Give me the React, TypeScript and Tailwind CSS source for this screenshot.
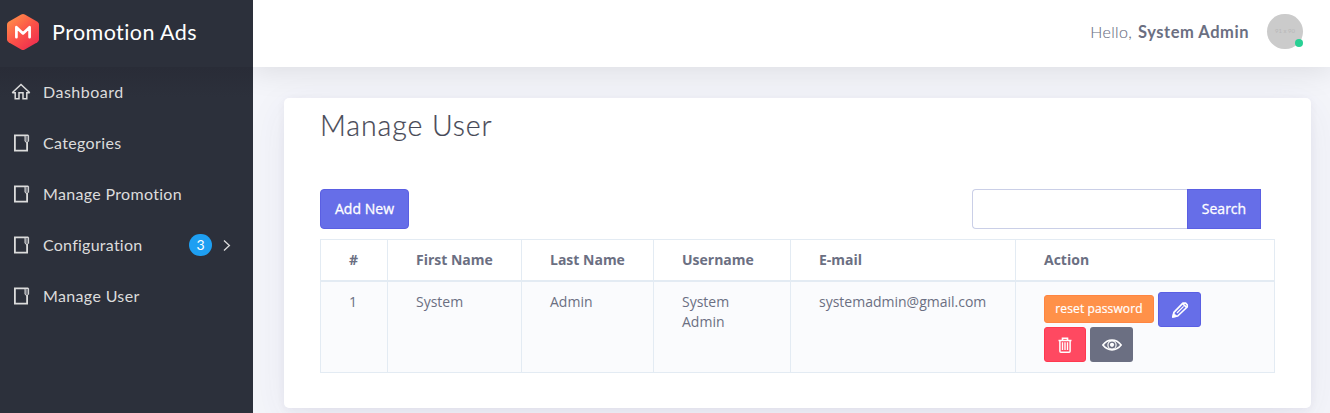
import React from 'react';

const BookIcon = () => (
  <svg className="h-5 w-5 shrink-0" viewBox="0 0 20 20" fill="none" stroke="#dcdcdc">
    <path d="M3.9 18.4V2.4H17.3M3.1 17.6H17M16.1 9V18.4" strokeWidth="1.8" />
    <path d="M14 2.5V8.3L15.8 9.8L17.6 8.3V2.5Z" strokeWidth="1" fill="#777a82" />
  </svg>
);

const HomeIcon = () => (
  <svg className="h-5 w-5 shrink-0" viewBox="0 0 20 20" fill="none" stroke="#dcdcdc" strokeWidth="1.5">
    <path d="M1.2 10.7L10 2.5L18.8 10.7" />
    <path d="M1.4 10.7H4.2V16.8H8V10.7H12V16.8H15.8V10.7H18.6" />
  </svg>
);

const Logo = () => (
  <svg className="h-9 w-8 shrink-0" viewBox="0 0 32 36">
    <defs>
      <linearGradient id="logoFill" x1="0.1" y1="0.05" x2="0.8" y2="0.95">
        <stop offset="0" stopColor="#ff9149" />
        <stop offset="0.55" stopColor="#fb5148" />
        <stop offset="1" stopColor="#ef2f4f" />
      </linearGradient>
    </defs>
    <path
      d="M14.2 0.5Q16 -0.5 17.8 0.5L30.4 7.7Q32 8.7 32 10.5V25.5Q32 27.3 30.4 28.3L17.8 35.5Q16 36.5 14.2 35.5L1.6 28.3Q0 27.3 0 25.5V10.5Q0 8.7 1.6 7.7Z"
      fill="url(#logoFill)"
    />
    <path d="M9.4 23.2V13.2L16 19.4L22.6 13.2V23.2" fill="none" stroke="#fff" strokeWidth="2.7" strokeLinecap="round" strokeLinejoin="round" />
  </svg>
);

const PencilIcon = () => (
  <svg className="h-[18px] w-[18px]" viewBox="0 0 18 18" fill="none" stroke="#fff" strokeWidth="1.7" strokeLinejoin="round">
    <path d="M1.8 16L2.9 11.4L11.9 2.2H14.6L16.2 3.8V6L6.7 15Z" />
    <path d="M6 12L12.6 5.4" strokeWidth="1.2" />
    <path d="M11.8 2.8L15.6 6.4" strokeWidth="1.6" />
    <path d="M1.6 16.3L2.6 12.2L6 15.3Z" fill="#fff" strokeWidth="0.8" />
  </svg>
);

const TrashIcon = () => (
  <svg className="h-4 w-4" viewBox="0 0 16 16" fill="none" stroke="#fff">
    <path d="M1.5 3.5H14.5M5.5 3V1.2H10.5V3" strokeWidth="1.6" />
    <path d="M2.9 3.5V14.2Q2.9 15.2 3.9 15.2H12.1Q13.1 15.2 13.1 14.2V3.5" strokeWidth="1.5" />
    <path d="M5.5 5.2V13M8 5.2V13M10.5 5.2V13" strokeWidth="1.4" />
  </svg>
);

const EyeIcon = () => (
  <svg className="h-4 w-5" viewBox="0 0 20 16" fill="none" stroke="#fff">
    <path d="M0.9 8Q4.6 3.2 10 3.2T19.1 8Q15.4 12.8 10 12.8T0.9 8Z" strokeWidth="1.7" />
    <circle cx="10" cy="8" r="4.1" strokeWidth="1.2" />
    <circle cx="10" cy="7.8" r="2.1" fill="#fff" stroke="none" />
  </svg>
);

const menu = [
  { label: 'Dashboard', spacing: 'tracking-[0.5px]', home: true },
  { label: 'Categories', spacing: 'tracking-[0.35px]' },
  { label: 'Manage Promotion', spacing: 'tracking-[0.32px]' },
  { label: 'Configuration', spacing: 'tracking-[0.25px]', badge: 3 },
  { label: 'Manage User', spacing: 'tracking-[0.35px]' },
];

const columns = [
  { title: '#', width: 'w-[67px]' },
  { title: 'First Name', width: 'w-[134px]' },
  { title: 'Last Name', width: 'w-[132px]' },
  { title: 'Username', width: 'w-[137px]' },
  { title: 'E-mail', width: 'w-[225px]' },
  { title: 'Action', width: 'w-[259px]' },
];

const cells = ['1', 'System', 'Admin', 'System Admin', 'systemadmin@gmail.com'];

export default function App() {
  return (
    <div className="flex h-[413px] w-[1330px] overflow-hidden bg-[#f4f5fa] font-['Open_Sans',sans-serif] text-sm text-[#6b6f82]">
      <aside className="z-10 flex w-[253px] shrink-0 flex-col bg-[#2c303b] font-['Lato',sans-serif]">
        <div className="flex h-[67px] items-center gap-[13px] pb-[3px] pl-[7px]">
          <Logo />
          <span className="whitespace-nowrap text-[21.5px] tracking-[0.42px] text-white">Promotion Ads</span>
        </div>
        <nav className="flex grow flex-col bg-linear-to-b from-[#292c37] to-[#2c303b] to-[30px]">
          {menu.map((item) => (
            <a key={item.label} className="flex h-[51px] items-center pb-[2px] pl-[11px]">
              {item.home ? <HomeIcon /> : <BookIcon />}
              <span className={`ml-3 whitespace-nowrap text-base text-[#dcdcdc] ${item.spacing}`}>{item.label}</span>
              {item.badge && (
                <span className="ml-auto mr-[18px] flex items-center gap-[11px]">
                  <span className="flex h-[22px] w-[23px] items-center justify-center rounded-full bg-[#1e9ff2] text-sm text-white">
                    {item.badge}
                  </span>
                  <svg className="h-3 w-[12px]" viewBox="0 0 12 12" fill="none" stroke="#dcdcdc" strokeWidth="1.3">
                    <path d="M1 1.5L6.4 6.5L1 11.5" />
                  </svg>
                </span>
              )}
            </a>
          ))}
        </nav>
      </aside>

      <div className="flex min-w-0 grow flex-col">
        <header className="flex h-[67px] shrink-0 items-center justify-end bg-white pr-[27px] pb-[4px] font-['Lato',sans-serif] shadow-[0_2px_30px_2px_rgba(0,0,0,0.1)]">
          <span className="whitespace-nowrap text-base font-light tracking-[0.35px] [-webkit-text-stroke:0.1px]">Hello,</span>
          <span className="ml-[6px] mr-[18px] whitespace-nowrap pt-[2px] text-[16.5px] font-bold tracking-[0.53px]">System Admin</span>
          <span className="relative flex h-[35px] w-9 items-center justify-center rounded-full bg-[#cbcbcb] text-[6px] text-[#b8b8b8]">
            91 x 90
            <i className="absolute right-0 bottom-[2px] h-2 w-2 rounded-full bg-[#28d094]" />
          </span>
        </header>

        <main className="pt-[31px] pl-[31px]">
          <section className="h-[310px] w-[1027px] rounded-[5px] bg-white px-9 pt-[9px] shadow-[0_10px_40px_0_rgba(62,57,107,0.07),0_2px_9px_0_rgba(62,57,107,0.06)]">
            <h1 className="h-[82px] font-['Lato',sans-serif] text-[28.5px] leading-9 font-light tracking-[0.9px] text-[#464855] [-webkit-text-stroke:0.2px]">Manage User</h1>
            <div className="flex h-10 items-stretch justify-between pr-[14px]">
              <button className="w-[89px] rounded-[4px] border border-[#5a5fe3] bg-[#666ee8] font-medium tracking-[0.05px] text-white [-webkit-text-stroke:0.3px]">Add New</button>
              <div className="flex">
                <input aria-label="Search" className="w-[215px] rounded-l-[4px] border border-r-0 border-[#cacfe7] bg-white outline-none" />
                <button className="w-[74px] border border-[#5a5fe3] bg-[#666ee8] font-medium text-white [-webkit-text-stroke:0.3px]">Search</button>
              </div>
            </div>
            <table className="mt-[10px] w-[955px] table-fixed border-separate border-spacing-0 border-t border-l border-[#e3ebf3] text-left">
              <thead>
                <tr className="h-[42px]">
                  {columns.map((c) => (
                    <th key={c.title} className={`border-r border-b-2 border-[#e3ebf3] py-0 pl-7 leading-5 font-bold ${c.width}`}>
                      {c.title}
                    </th>
                  ))}
                </tr>
              </thead>
              <tbody>
                <tr className="h-[91px] bg-[#fafbfd]">
                  {cells.map((text, i) => (
                    <td key={i} className="border-r border-b border-[#e3ebf3] px-7 pt-[10px] align-top leading-5">
                      {text}
                    </td>
                  ))}
                  <td className="border-r border-b border-[#e3ebf3] pt-[10px] pl-7 align-top">
                    <div className="flex gap-1">
                      <button className="mt-[3px] h-7 w-[110px] rounded-[3px] border border-[#ff8541] bg-[#ff9149] text-xs font-medium tracking-[0.12px] text-white [-webkit-text-stroke:0.2px]">
                        reset password
                      </button>
                      <button className="flex h-[35px] w-[43px] items-center justify-center rounded-[3px] border border-[#5a5fe3] bg-[#666ee8]">
                        <PencilIcon />
                      </button>
                    </div>
                    <div className="flex gap-1">
                      <button className="flex h-[35px] w-[42px] items-center justify-center rounded-[3px] border border-[#ff394f] bg-[#ff4961]">
                        <TrashIcon />
                      </button>
                      <button className="flex h-[35px] w-[43px] items-center justify-center rounded-[3px] bg-[#6b6f82]">
                        <EyeIcon />
                      </button>
                    </div>
                  </td>
                </tr>
              </tbody>
            </table>
          </section>
        </main>
      </div>
    </div>
  );
}
